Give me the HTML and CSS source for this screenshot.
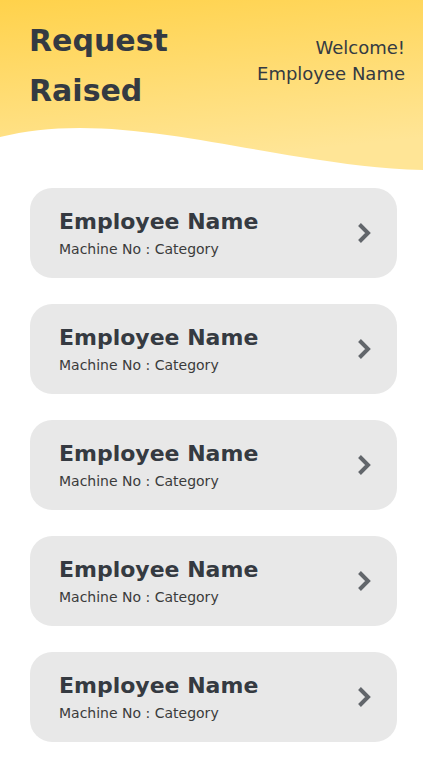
FILE: index.html
```html
<!DOCTYPE html>
<html lang="en">
<head>
  <meta charset="UTF-8" />
  <title>Request Raised</title>
  <meta name="viewport" content="width=device-width, initial-scale=1.0" />
  <link rel="stylesheet" href="styles.css">
</head>
<body>
  <header class="top">
    <svg class="wave" viewBox="0 0 423 172" preserveAspectRatio="none">
      <defs>
        <linearGradient id="sun" x1="0" y1="0" x2="0.25" y2="1">
          <stop offset="0" stop-color="#ffd24b" />
          <stop offset="1" stop-color="#ffe596" />
        </linearGradient>
      </defs>
      <path d="M0,0 L423,0 L423,170 C380,169 345,164 300,157 C230,146 150,128 80,128 C50,128 25,131 0,137 Z" fill="url(#sun)" />
    </svg>
    <h1 class="page-title">Request<br>Raised</h1>
    <div class="welcome">Welcome!<br>Employee Name</div>
  </header>

  <div class="request-list">
    <div class="request-card">
      <div class="request-info">
        <div class="request-name">Employee Name</div>
        <div class="request-meta">Machine No : Category</div>
      </div>
      <svg class="chevron" width="14" height="22" viewBox="0 0 14 22"><polyline points="2.5,2.5 11,11 2.5,19.5" /></svg>
    </div>
    <div class="request-card">
      <div class="request-info">
        <div class="request-name">Employee Name</div>
        <div class="request-meta">Machine No : Category</div>
      </div>
      <svg class="chevron" width="14" height="22" viewBox="0 0 14 22"><polyline points="2.5,2.5 11,11 2.5,19.5" /></svg>
    </div>
    <div class="request-card">
      <div class="request-info">
        <div class="request-name">Employee Name</div>
        <div class="request-meta">Machine No : Category</div>
      </div>
      <svg class="chevron" width="14" height="22" viewBox="0 0 14 22"><polyline points="2.5,2.5 11,11 2.5,19.5" /></svg>
    </div>
    <div class="request-card">
      <div class="request-info">
        <div class="request-name">Employee Name</div>
        <div class="request-meta">Machine No : Category</div>
      </div>
      <svg class="chevron" width="14" height="22" viewBox="0 0 14 22"><polyline points="2.5,2.5 11,11 2.5,19.5" /></svg>
    </div>
    <div class="request-card">
      <div class="request-info">
        <div class="request-name">Employee Name</div>
        <div class="request-meta">Machine No : Category</div>
      </div>
      <svg class="chevron" width="14" height="22" viewBox="0 0 14 22"><polyline points="2.5,2.5 11,11 2.5,19.5" /></svg>
    </div>
  </div>
</body>
</html>
```

FILE: styles.css
```css
body {
  margin: 0;
  font-family: 'DejaVu Sans', sans-serif;
  background-color: #ffffff;
  color: #343a42;
}
.top {
  position: relative;
  height: 170px;
  display: flex;
  justify-content: space-between;
  align-items: flex-start;
  padding: 16px 18px 0 29px;
  box-sizing: border-box;
}
.wave {
  position: absolute;
  top: 0;
  left: 0;
  width: 100%;
  height: 172px;
  z-index: 0;
}
.page-title {
  position: relative;
  margin: 0;
  font-size: 30px;
  line-height: 50px;
  font-weight: bold;
}
.welcome {
  position: relative;
  margin-top: 19px;
  font-size: 18px;
  line-height: 26px;
  text-align: right;
}
.request-list {
  display: flex;
  flex-direction: column;
  gap: 26px;
  padding: 18px 26px 20px 30px;
}
.request-card {
  height: 90px;
  box-sizing: border-box;
  display: flex;
  align-items: center;
  justify-content: space-between;
  padding: 0 26px 0 29px;
  background-color: #e8e8e8;
  border-radius: 22px;
}
.request-name {
  font-size: 22px;
  line-height: 26px;
  font-weight: bold;
  color: #353a41;
}
.request-meta {
  margin-top: 5px;
  font-size: 14px;
  line-height: 18px;
  color: #3b3b3b;
}
.chevron polyline {
  fill: none;
  stroke: #62666b;
  stroke-width: 4;
}
```
